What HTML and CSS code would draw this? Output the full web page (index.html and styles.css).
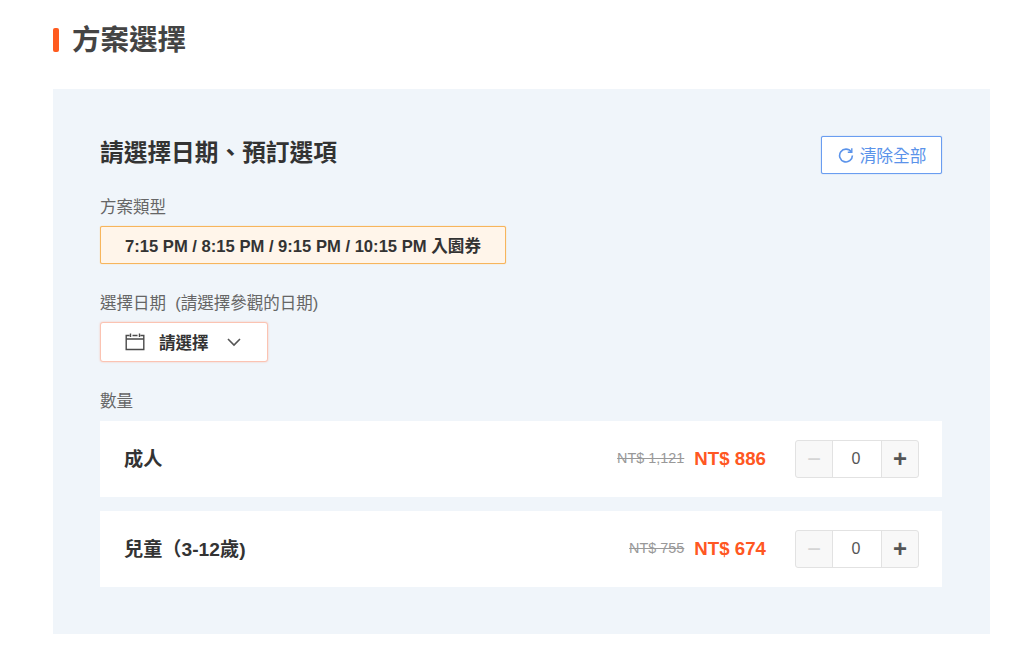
FILE: index.html
```html
<!DOCTYPE html>
<html lang="zh-Hant">
<head>
<meta charset="utf-8">
<title>方案選擇</title>
<link rel="stylesheet" href="styles.css">
</head>
<body>
<main class="page">
  <h2 class="section-title"><span class="title-bar"></span>方案選擇</h2>
  <section class="panel">
    <div class="panel-head">
      <h3 class="panel-title">請選擇日期<span class="comma">、</span>預訂選項</h3>
      <button class="clear-btn">
        <svg class="clear-icon" viewBox="0 0 16 16" width="16" height="16" fill="none" stroke="#5b93ea" stroke-width="1.6"><path d="M13.2 4.800A6.400 6.400 0 1 0 14.400 8.500"/><path d="M13.800 1.200v4H9.800" stroke-width="1.400"/></svg>
        清除全部
      </button>
    </div>
    <div class="label type-label">方案類型</div>
    <div class="option">7:15 PM / 8:15 PM / 9:15 PM / 10:15 PM 入園券</div>
    <div class="label date-label">選擇日期&nbsp; (請選擇參觀的日期)</div>
    <button class="date-btn">
      <svg viewBox="0 0 20 18" width="20" height="18" fill="none" stroke="#4a4a4a" stroke-width="1.4"><path d="M4.500 2.500H1.200v14h17.600v-14h-3.300M7.500 2.500h5M1.200 6h17.600M5.500 .5v3.500M14.500 .5v3.500"/></svg>
      <span class="date-text">請選擇</span>
      <svg viewBox="0 0 14 9" width="14" height="9" fill="none" stroke="#555" stroke-width="1.6"><path d="M1 1l6 6 6-6"/></svg>
    </button>
    <div class="label qty-label">數量</div>
    <div class="row">
      <span class="row-name">成人</span>
      <s class="old-price">NT$ 1,121</s>
      <span class="price">NT$ 886</span>
      <div class="stepper">
        <span class="step minus">−</span>
        <span class="count">0</span>
        <span class="step plus">+</span>
      </div>
    </div>
    <div class="row">
      <span class="row-name">兒童（3-12歲)</span>
      <s class="old-price">NT$ 755</s>
      <span class="price">NT$ 674</span>
      <div class="stepper">
        <span class="step minus">−</span>
        <span class="count">0</span>
        <span class="step plus">+</span>
      </div>
    </div>
  </section>
</main>
</body>
</html>
```

FILE: styles.css
```css
* { box-sizing: border-box; }
html, body { margin: 0; background: #fff; }
body {
  font-family: "Liberation Sans", "Noto Sans CJK TC", sans-serif;
  color: #333;
  overflow: hidden;
}
.page { width: 1024px; height: 664px; padding: 22px 34px 0 53px; }
.section-title {
  display: flex;
  align-items: center;
  gap: 13px;
  margin: 0 0 31px;
  height: 36px;
  font-size: 28.500px;
  line-height: 36px;
  font-weight: 700;
  color: #444;
}
.title-bar { width: 6px; height: 24px; border-radius: 2px; background: #ff5b1f; }
.panel { background: #f0f5fa; height: 545px; padding: 47px 48px 0 47px; }
.panel-head { display: flex; justify-content: space-between; align-items: flex-start; height: 54px; }
.panel-title { margin: -1px 0 0; font-size: 23.700px; line-height: 32px; font-weight: 700; color: #333; }
.comma { font-family: "Noto Sans CJK SC", sans-serif; }
.clear-btn {
  display: flex;
  align-items: center;
  justify-content: center;
  gap: 6px;
  width: 121px;
  height: 38px;
  padding: 0 0 0 1px;
  background: #fff;
  border: 1px solid #6a9df0;
  border-radius: 2px;
  box-shadow: 0 0 1px #6a9df0;
  color: #5b93ea;
  font: inherit;
  font-size: 16.700px;
}
.label { font-size: 16.500px; line-height: 24px; color: #666; }
.type-label { margin-top: 5px; }
.option {
  margin-top: 7px;
  width: 406px;
  height: 38px;
  display: flex;
  align-items: center;
  justify-content: center;
  padding-bottom: 1px;
  background: #fff5ea;
  border: 1px solid #f7b55c;
  border-radius: 2px;
  box-shadow: 0 0 1px #f7b55c;
  font-size: 16.600px;
  font-weight: 700;
  color: #333;
}
.date-label { margin-top: 27px; }
.date-btn {
  display: flex;
  align-items: center;
  margin-top: 7px;
  width: 168px;
  height: 40px;
  padding: 0 0 0 24px;
  background: #fff;
  border: 1px solid #fbc3b2;
  border-radius: 3px;
  box-shadow: 0 0 2px rgba(255, 120, 80, .4);
  font: inherit;
}
.date-text { margin: 0 18px 0 14px; font-size: 16.500px; font-weight: 700; color: #333; }
.qty-label { margin-top: 27px; }
.row {
  display: flex;
  align-items: center;
  height: 76px;
  margin-bottom: 14px;
  padding: 0 23px 0 24px;
  background: #fff;
}
.qty-label + .row { margin-top: 8px; }
.row-name { margin-right: auto; margin-bottom: 3px; font-size: 19.200px; font-weight: 700; color: #333; }
.old-price { margin: 0 10px 2px 0; font-size: 14.400px; color: #999; }
.price { margin-right: 29px; font-size: 18.700px; font-weight: 700; color: #ff5722; }
.stepper {
  display: flex;
  width: 124px;
  height: 38px;
  background: #f8f8f8;
  border: 1px solid #e2e2e2;
  border-radius: 3px;
}
.step { width: 36px; display: flex; align-items: center; justify-content: center; font-size: 24px; color: #555; }
.minus { color: #d5d5d5; }
.plus { font-weight: 700; }
.count {
  flex: 1;
  display: flex;
  align-items: center;
  justify-content: center;
  padding-right: 2px;
  background: #fff;
  border-left: 1px solid #e2e2e2;
  border-right: 1px solid #e2e2e2;
  font-size: 16px;
  color: #555;
}
```
